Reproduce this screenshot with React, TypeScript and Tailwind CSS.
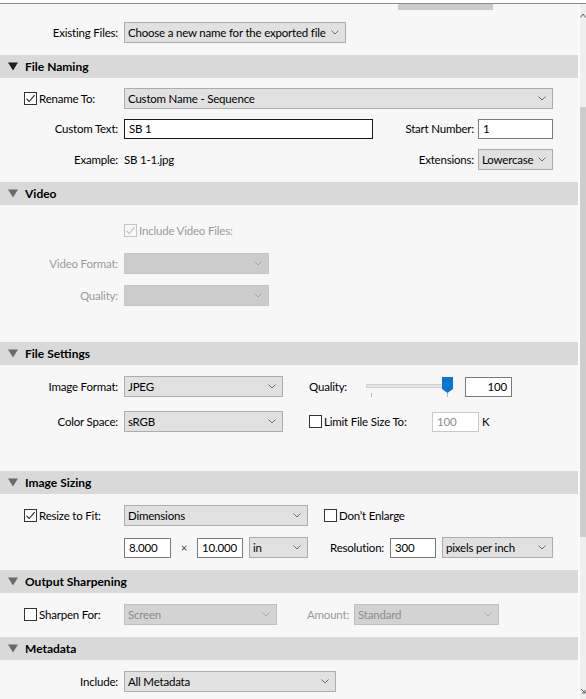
import React from "react";

const Chevron = ({ color = "#6b6b6b" }: { color?: string }) => (
  <svg width="8" height="5" viewBox="0 0 8 5" className="shrink-0">
    <path d="M0.5 0.5 L4 4 L7.5 0.5" fill="none" stroke={color} strokeWidth="1" />
  </svg>
);

type SelProps = { w: string; value?: string; variant?: "normal" | "dis1" | "dis2" };
const Select = ({ w, value = "", variant = "normal" }: SelProps) => {
  const cls =
    variant === "normal"
      ? "bg-[#e1e1e1] border-[#adadad] text-black"
      : variant === "dis1"
      ? "bg-[#cccccc] border-[#c6c6c6] text-[#8c8c8c]"
      : "bg-[#d3d3d3] border-[#bfbfbf] text-[#8c8c8c]";
  return (
    <div className={`${w} ${cls} h-[21px] border flex items-center justify-between pl-[3px] pr-[6px] shrink-0`}>
      <span className="whitespace-nowrap leading-none">{value}</span>
      <Chevron color={variant === "normal" ? "#6b6b6b" : "#a8a8a8"} />
    </div>
  );
};

type InProps = { w: string; value: string; right?: boolean; border?: string; text?: string };
const Input = ({ w, value, right, border = "border-[#7a7a7a]", text = "text-black" }: InProps) => (
  <div
    className={`${w} h-[20px] bg-white border ${border} ${text} flex items-center px-[4px] shrink-0 ${
      right ? "justify-end" : ""
    }`}
  >
    <span className="leading-none whitespace-nowrap">{value}</span>
  </div>
);

const Check = ({ checked, disabled }: { checked?: boolean; disabled?: boolean }) => (
  <div
    className={`w-[13px] h-[13px] border ${
      disabled ? "border-[#c4c4c4] bg-[#f7f7f7]" : "border-[#333333] bg-white"
    } flex items-center justify-center shrink-0`}
  >
    {checked && (
      <svg width="11" height="11" viewBox="0 0 11 11">
        <path
          d="M1.5 5.8 L4.2 8.5 L9.6 2.2"
          fill="none"
          stroke={disabled ? "#bdbdbd" : "#222222"}
          strokeWidth="1.1"
        />
      </svg>
    )}
  </div>
);

const Header = ({ title, dark }: { title: string; dark?: boolean }) => (
  <div className="h-[23px] bg-[#d9d9d9] flex items-center pl-[8px]">
    <svg width="10" height="9" viewBox="0 0 10 9" className="shrink-0">
      <path d="M0 0.5 L10 0.5 L5 8.5 Z" fill={dark ? "#1e1e1e" : "#6a6a6a"} />
    </svg>
    <span className="ml-[7px] font-bold text-black leading-none text-[12px] tracking-normal">{title}</span>
  </div>
);

const Label = ({ children, gray }: { children: React.ReactNode; gray?: boolean }) => (
  <div className={`w-[119px] text-right pr-[1px] shrink-0 whitespace-nowrap ${gray ? "text-[#9a9a9a]" : "text-black"}`}>
    {children}
  </div>
);

const CheckLabel = ({ label, checked }: { label: string; checked?: boolean }) => (
  <div className="w-[124px] pl-[24px] flex items-center gap-[2px] shrink-0">
    <Check checked={checked} />
    <span className="whitespace-nowrap">{label}</span>
  </div>
);

const Row = ({ children, className = "" }: { children: React.ReactNode; className?: string }) => (
  <div className={`h-[21px] flex items-center ${className}`}>{children}</div>
);

const Slider = () => (
  <svg width="87" height="21" viewBox="0 0 87 21" className="shrink-0">
    <rect x="0.5" y="8.5" width="80" height="3" fill="#e6e6e6" stroke="#d0d0d0" strokeWidth="1" />
    <line x1="5.5" y1="17" x2="5.5" y2="21" stroke="#b5b5b5" />
    <line x1="81.5" y1="17" x2="81.5" y2="21" stroke="#b5b5b5" />
    <path d="M76 1 L87 1 L87 13 L81.5 17 L76 13 Z" fill="#0a74d1" />
  </svg>
);

export default function App() {
  return (
    <div className="w-[586px] h-[699px] overflow-hidden bg-white text-[11.5px] tracking-[-0.2px] text-black font-['Lato','Noto_Sans',sans-serif] select-none">
      <div className="h-[3px] bg-white" />
      <div className="h-px bg-[#8a8a8a]" />
      <div className="flex h-[695px]">
        <div className="w-[578px] bg-[#f7f7f7] shrink-0">
          {/* top */}
          <div className="h-[6px] ml-[398px] w-[95px] bg-[#cbcbcb]" />
          <Row className="mt-[12px]">
            <Label>Existing Files:</Label>
            <div className="w-[5px]" />
            <Select w="w-[222px]" value="Choose a new name for the exported file" />
          </Row>
          <div className="h-[12px]" />

          <Header title="File Naming" dark />
          <div className="pt-[10px] pb-[12px] flex flex-col gap-[10px]">
            <Row>
              <CheckLabel label="Rename To:" checked />
              <Select w="w-[429px]" value="Custom Name - Sequence" />
            </Row>
            <Row className="-mt-[1px]">
              <Label>Custom Text:</Label>
              <div className="w-[5px]" />
              <Input w="w-[249px]" value="SB 1" border="border-[#1a1a1a]" />
              <div className="w-[101px] text-right whitespace-nowrap">Start Number:</div>
              <div className="w-[4px]" />
              <Input w="w-[75px]" value="1" />
            </Row>
            <Row>
              <Label>Example:</Label>
              <div className="w-[5px]" />
              <span className="whitespace-nowrap">SB 1-1.jpg</span>
              <div className="ml-auto whitespace-nowrap">Extensions:</div>
              <div className="w-[4px]" />
              <Select w="w-[75px]" value="Lowercase" />
              <div className="w-[25px]" />
            </Row>
          </div>

          <Header title="Video" />
          <div className="pt-[15px] pb-[36px]">
            <Row>
              <div className="w-[124px] shrink-0" />
              <Check checked disabled />
              <span className="ml-[2px] text-[#9a9a9a]">Include Video Files:</span>
            </Row>
            <Row className="mt-[12px]">
              <Label gray>Video Format:</Label>
              <div className="w-[5px]" />
              <Select w="w-[145px]" variant="dis1" />
            </Row>
            <Row className="mt-[11px]">
              <Label gray>Quality:</Label>
              <div className="w-[5px]" />
              <Select w="w-[145px]" variant="dis1" />
            </Row>
          </div>

          <Header title="File Settings" />
          <div className="pt-[11px] pb-[39px]">
            <Row>
              <Label>Image Format:</Label>
              <div className="w-[5px]" />
              <Select w="w-[159px]" value="JPEG" />
              <div className="w-[26px]" />
              <div className="w-[57px] shrink-0">Quality:</div>
              <Slider />
              <div className="w-[12px]" />
              <Input w="w-[47px]" value="100" right />
            </Row>
            <Row className="mt-[14px]">
              <Label>Color Space:</Label>
              <div className="w-[5px]" />
              <Select w="w-[159px]" value="sRGB" />
              <div className="w-[26px]" />
              <div className="w-[123px] flex items-center gap-[2px] shrink-0">
                <Check />
                <span className="whitespace-nowrap">Limit File Size To:</span>
              </div>
              <Input w="w-[47px]" value="100" border="border-[#c8c8c8]" text="text-[#8c8c8c]" />
              <span className="ml-[3px]">K</span>
            </Row>
          </div>

          <Header title="Image Sizing" />
          <div className="pt-[11px] pb-[12px]">
            <Row>
              <CheckLabel label="Resize to Fit:" checked />
              <Select w="w-[184px]" value="Dimensions" />
              <div className="w-[16px]" />
              <Check />
              <span className="ml-[2px] whitespace-nowrap">Don’t Enlarge</span>
            </Row>
            <Row className="mt-[11px]">
              <div className="w-[124px] shrink-0" />
              <Input w="w-[47px]" value="8.000" />
              <div className="w-[26px] shrink-0 text-center text-[#444]">×</div>
              <Input w="w-[46px]" value="10.000" />
              <div className="w-[6px] shrink-0" />
              <Select w="w-[59px]" value="in" />
              <div className="w-[22px] shrink-0" />
              <div className="w-[60px] shrink-0 whitespace-nowrap">Resolution:</div>
              <Input w="w-[46px]" value="300" />
              <div className="w-[6px] shrink-0" />
              <Select w="w-[111px]" value="pixels per inch" />
            </Row>
          </div>

          <Header title="Output Sharpening" />
          <div className="pt-[11px] pb-[12px]">
            <Row>
              <CheckLabel label="Sharpen For:" />
              <Select w="w-[153px]" value="Screen" variant="dis2" />
              <div className="w-[30px] shrink-0" />
              <div className="w-[47px] shrink-0 text-[#9a9a9a] whitespace-nowrap">Amount:</div>
              <Select w="w-[145px]" value="Standard" variant="dis2" />
            </Row>
          </div>

          <Header title="Metadata" />
          <div className="pt-[11px]">
            <Row>
              <Label>Include:</Label>
              <div className="w-[5px]" />
              <Select w="w-[212px]" value="All Metadata" />
            </Row>
          </div>
        </div>
        <div className="w-[2px] bg-[#fbfbfb] shrink-0" />
        <div className="w-[6px] bg-[#efefef] shrink-0 flex flex-col relative">
          <svg width="6" height="5" viewBox="0 0 6 5" className="mt-[9px]">
            <path d="M0.5 4.5 L3 1 L5.5 4.5" fill="none" stroke="#606060" strokeWidth="1" />
          </svg>
          <div className="mt-[89px] h-[430px] bg-[#cdcdcd]" />
          <svg width="6" height="6" viewBox="0 0 6 6" className="absolute left-0 top-[684px]">
            <path d="M1 1 L5 5 M5 2 L5 5 L2 5" fill="none" stroke="#606060" strokeWidth="1" />
          </svg>
        </div>
      </div>
    </div>
  );
}
